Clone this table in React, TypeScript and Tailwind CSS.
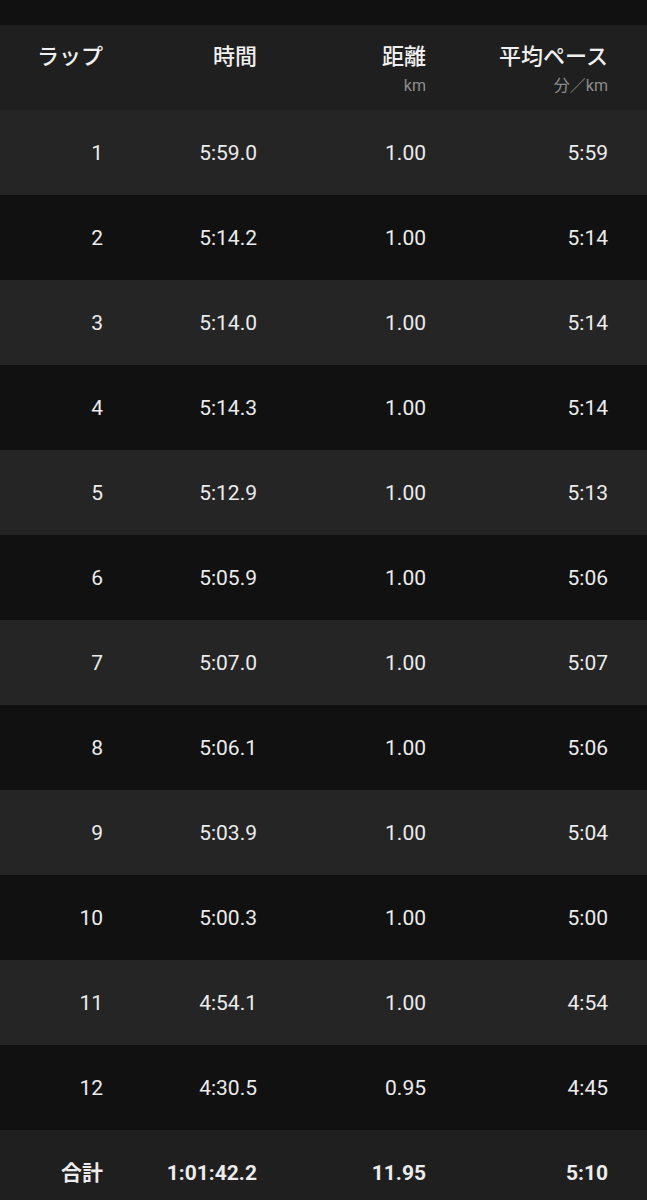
import React from "react";

const rows: [string, string, string, string][] = [
  ["1", "5:59.0", "1.00", "5:59"],
  ["2", "5:14.2", "1.00", "5:14"],
  ["3", "5:14.0", "1.00", "5:14"],
  ["4", "5:14.3", "1.00", "5:14"],
  ["5", "5:12.9", "1.00", "5:13"],
  ["6", "5:05.9", "1.00", "5:06"],
  ["7", "5:07.0", "1.00", "5:07"],
  ["8", "5:06.1", "1.00", "5:06"],
  ["9", "5:03.9", "1.00", "5:04"],
  ["10", "5:00.3", "1.00", "5:00"],
  ["11", "4:54.1", "1.00", "4:54"],
  ["12", "4:30.5", "0.95", "4:45"],
];

const font = { fontFamily: "Roboto, 'Noto Sans CJK JP', sans-serif" };

function Row({ cells, bg, bold }: { cells: string[]; bg: string; bold?: boolean }) {
  return (
    <div className={`flex h-[85px] items-center pt-[3px] text-[21px] text-[#ececec] ${bg} ${bold ? "font-bold" : ""}`}>
      <div className="w-[103px] text-right">{cells[0]}</div>
      <div className="w-[154px] text-right">{cells[1]}</div>
      <div className="w-[169px] text-right">{cells[2]}</div>
      <div className="w-[182px] text-right">{cells[3]}</div>
    </div>
  );
}

export default function App() {
  return (
    <div className="h-[1200px] w-[647px] overflow-hidden bg-[#111111]" style={font}>
      <div className="h-[25px] bg-[#111111]" />
      <div className="flex h-[85px] bg-[#1f1f1f] pt-[13px]">
        {[
          ["ラップ", "", "w-[103px]"],
          ["時間", "", "w-[154px]"],
          ["距離", "km", "w-[169px]"],
          ["平均ペース", "分／km", "w-[182px]"],
        ].map(([t, s, w]) => (
          <div key={t} className={`${w} flex flex-col items-end`}>
            <div
              className="text-[22px] font-medium leading-[32px] text-[#f0f0f0]"
              style={{ fontFamily: "'Noto Sans CJK JP', sans-serif" }}
            >
              {t}
            </div>
            <div
              className="mt-[6px] text-[16px] leading-[20px] text-[#8c8c8c]"
              style={{ fontFamily: "Roboto, 'Noto Sans CJK JP', sans-serif" }}
            >
              {s}
            </div>
          </div>
        ))}
      </div>
      {rows.map((r, i) => (
        <Row key={r[0]} cells={r} bg={i % 2 === 0 ? "bg-[#252525]" : "bg-[#111111]"} />
      ))}
      <Row cells={["合計", "1:01:42.2", "11.95", "5:10"]} bg="bg-[#1f1f1f]" bold />
    </div>
  );
}
